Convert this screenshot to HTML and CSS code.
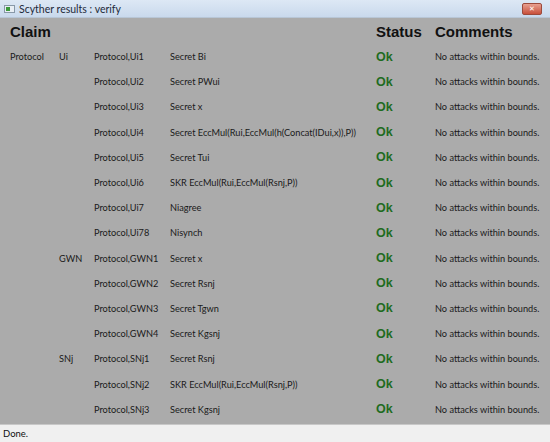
FILE: index.html
```html
<!DOCTYPE html>
<html>
<head>
<meta charset="utf-8">
<link rel="stylesheet" href="styles.css">
</head>
<body>
<div class="window">
  <div class="titlebar">
    <div class="appicon"><span class="appicon-dot"></span></div>
    <span class="title">Scyther results : verify</span>
    <div class="close">✕</div>
  </div>
  <div class="content">
    <div class="grid">
      <div class="h">Claim</div><div></div><div></div><div></div><div class="h">Status</div><div class="h">Comments</div>

      <div class="c">Protocol</div><div class="c">Ui</div><div class="c">Protocol,Ui1</div><div class="c">Secret Bi</div><div class="ok">Ok</div><div class="c">No attacks within bounds.</div>
      <div></div><div></div><div class="c">Protocol,Ui2</div><div class="c">Secret PWui</div><div class="ok">Ok</div><div class="c">No attacks within bounds.</div>
      <div></div><div></div><div class="c">Protocol,Ui3</div><div class="c">Secret x</div><div class="ok">Ok</div><div class="c">No attacks within bounds.</div>
      <div></div><div></div><div class="c">Protocol,Ui4</div><div class="c">Secret EccMul(Rui,EccMul(h(Concat(IDui,x)),P))</div><div class="ok">Ok</div><div class="c">No attacks within bounds.</div>
      <div></div><div></div><div class="c">Protocol,Ui5</div><div class="c">Secret Tui</div><div class="ok">Ok</div><div class="c">No attacks within bounds.</div>
      <div></div><div></div><div class="c">Protocol,Ui6</div><div class="c">SKR EccMul(Rui,EccMul(Rsnj,P))</div><div class="ok">Ok</div><div class="c">No attacks within bounds.</div>
      <div></div><div></div><div class="c">Protocol,Ui7</div><div class="c">Niagree</div><div class="ok">Ok</div><div class="c">No attacks within bounds.</div>
      <div></div><div></div><div class="c">Protocol,Ui78</div><div class="c">Nisynch</div><div class="ok">Ok</div><div class="c">No attacks within bounds.</div>
      <div></div><div class="c">GWN</div><div class="c">Protocol,GWN1</div><div class="c">Secret x</div><div class="ok">Ok</div><div class="c">No attacks within bounds.</div>
      <div></div><div></div><div class="c">Protocol,GWN2</div><div class="c">Secret Rsnj</div><div class="ok">Ok</div><div class="c">No attacks within bounds.</div>
      <div></div><div></div><div class="c">Protocol,GWN3</div><div class="c">Secret Tgwn</div><div class="ok">Ok</div><div class="c">No attacks within bounds.</div>
      <div></div><div></div><div class="c">Protocol,GWN4</div><div class="c">Secret Kgsnj</div><div class="ok">Ok</div><div class="c">No attacks within bounds.</div>
      <div></div><div class="c">SNj</div><div class="c">Protocol,SNj1</div><div class="c">Secret Rsnj</div><div class="ok">Ok</div><div class="c">No attacks within bounds.</div>
      <div></div><div></div><div class="c">Protocol,SNj2</div><div class="c">SKR EccMul(Rui,EccMul(Rsnj,P))</div><div class="ok">Ok</div><div class="c">No attacks within bounds.</div>
      <div></div><div></div><div class="c">Protocol,SNj3</div><div class="c">Secret Kgsnj</div><div class="ok">Ok</div><div class="c">No attacks within bounds.</div>
    </div>
  </div>
  <div class="statusbar">Done.</div>
</div>
</body>
</html>
```
FILE: styles.css
```css
html, body {
  margin: 0;
  padding: 0;
  width: 550px;
  height: 442px;
  overflow: hidden;
}
.window {
  width: 550px;
  height: 442px;
  display: flex;
  flex-direction: column;
  font-family: Lato, "Open Sans", sans-serif;
}
.titlebar {
  height: 18px;
  flex: none;
  display: flex;
  align-items: center;
  background: linear-gradient(#dde8f5, #c9d9ec);
  border-bottom: 1px solid #b8c6d6;
  box-sizing: border-box;
  padding-left: 4px;
  padding-right: 8px;
}
.appicon {
  width: 11px;
  height: 8px;
  background: #e8eef4;
  border: 1px solid #8898a8;
  box-sizing: border-box;
  display: flex;
  align-items: center;
  padding-left: 1px;
}
.appicon-dot {
  width: 4px;
  height: 4px;
  background: #3c9a3c;
}
.title {
  margin-left: 4px;
  font-size: 10.5px;
  color: #1e2a3a;
  flex: 1;
}
.close {
  width: 18px;
  height: 10px;
  border-radius: 2px;
  background: linear-gradient(#e8a090, #c8503c);
  border: 1px solid #9c4a3c;
  color: #fff;
  font-size: 7px;
  line-height: 10px;
  text-align: center;
  font-family: "DejaVu Sans", sans-serif;
  font-weight: bold;
}
.content {
  flex: 1;
  background: #ababab;
  padding-left: 10px;
  border-bottom: 1px solid #c8c8c8;
}
.grid {
  display: grid;
  grid-template-columns: 49px 35px 76px 206px 59px 1fr;
  grid-template-rows: 26px;
  grid-auto-rows: 25.2px;
  align-items: center;
}
.h {
  font-family: "Liberation Sans", Arial, sans-serif;
  font-weight: bold;
  font-size: 15px;
  color: #111;
  white-space: nowrap;
}
.c {
  font-size: 9.2px;
  color: #1a1a1a;
  white-space: nowrap;
}
.ok {
  font-family: "Liberation Sans", Arial, sans-serif;
  font-weight: bold;
  font-size: 12.5px;
  color: #1f6b1f;
}
.statusbar {
  height: 17px;
  flex: none;
  background: #f0f0f0;
  font-size: 9.5px;
  color: #111;
  padding-left: 3px;
  display: flex;
  align-items: center;
}
```
